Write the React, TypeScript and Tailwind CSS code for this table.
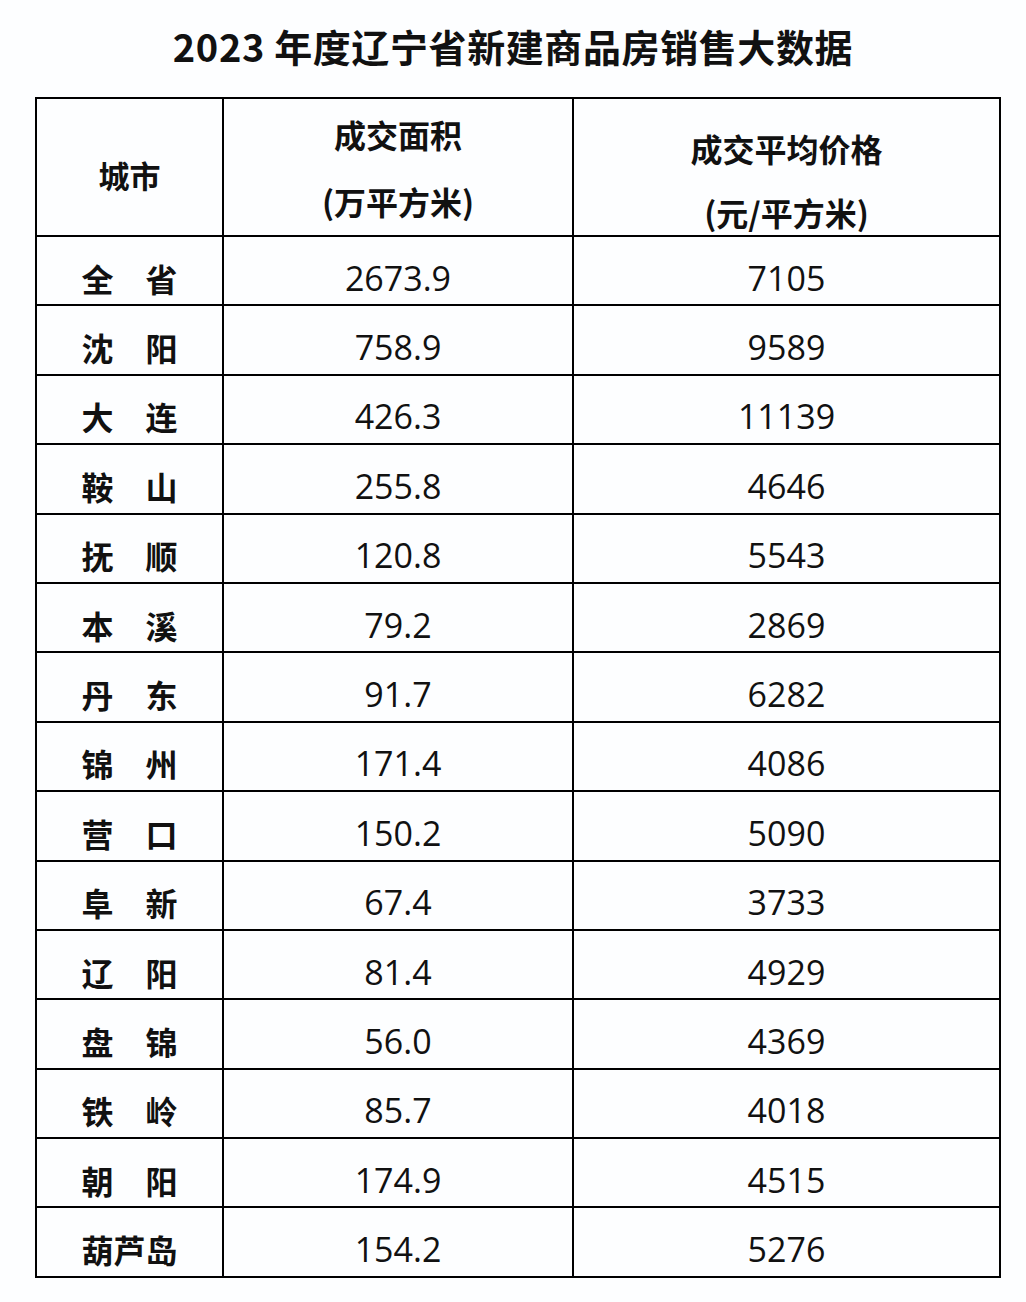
import React from 'react'

type Row = { city: string; area: string; price: string }

const rows: Row[] = [
  { city: '全　省', area: '2673.9', price: '7105' },
  { city: '沈　阳', area: '758.9', price: '9589' },
  { city: '大　连', area: '426.3', price: '11139' },
  { city: '鞍　山', area: '255.8', price: '4646' },
  { city: '抚　顺', area: '120.8', price: '5543' },
  { city: '本　溪', area: '79.2', price: '2869' },
  { city: '丹　东', area: '91.7', price: '6282' },
  { city: '锦　州', area: '171.4', price: '4086' },
  { city: '营　口', area: '150.2', price: '5090' },
  { city: '阜　新', area: '67.4', price: '3733' },
  { city: '辽　阳', area: '81.4', price: '4929' },
  { city: '盘　锦', area: '56.0', price: '4369' },
  { city: '铁　岭', area: '85.7', price: '4018' },
  { city: '朝　阳', area: '174.9', price: '4515' },
  { city: '葫芦岛', area: '154.2', price: '5276' },
]

const cjk = "font-['Noto_Sans_CJK_SC','Noto_Sans',sans-serif]"
const num = "font-['Open_Sans','Noto_Sans_CJK_SC',sans-serif]"

export default function App() {
  return (
    <div className="min-h-[1302px] w-[1026px] bg-[#fdfeff] text-[#111]">
      {/* 标题 */}
      <h1 className={`${cjk} h-[97px] pt-[22px] text-center text-[38px] font-bold leading-[48px] tracking-[0.6px]`}>
        2023 年度辽宁省新建商品房销售大数据
      </h1>

      <div className="pl-[35px]">
        <table className="w-[966px] table-fixed border-collapse border-2 border-black">
          <colgroup>
            <col className="w-[187px]" />
            <col className="w-[350px]" />
            <col />
          </colgroup>
          <thead>
            <tr className="h-[138px]">
              <th className={`${cjk} border-2 border-black p-0 pt-[56px] align-top text-[31px] font-bold leading-[40px]`}>
                城市
              </th>
              <th className={`${cjk} border-2 border-black p-0 pt-[2px] align-top text-[32px] font-bold`}>
                <div className="leading-[67px]">成交面积</div>
                <div className="h-[67px] leading-[67px]">(万平方米)</div>
              </th>
              <th className={`${cjk} border-2 border-black p-0 pt-[17px] align-top text-[32px] font-bold`}>
                <div className="h-[64px] leading-[64px]">成交平均价格</div>
                <div className="h-[55px] leading-[64px]">(元/平方米)</div>
              </th>
            </tr>
          </thead>
          <tbody>
            {rows.map((r) => (
              <tr key={r.city} className="h-[69.4px]">
                <td className={`${cjk} border-2 border-black p-0 pt-[14px] text-center text-[32px] font-bold leading-[40px]`}>
                  {r.city}
                </td>
                <td className={`${num} border-2 border-black p-0 pt-[14px] text-center text-[34px] leading-[40px]`}>
                  {r.area}
                </td>
                <td className={`${num} border-2 border-black p-0 pt-[14px] text-center text-[34px] leading-[40px]`}>
                  {r.price}
                </td>
              </tr>
            ))}
          </tbody>
        </table>
      </div>
    </div>
  )
}
